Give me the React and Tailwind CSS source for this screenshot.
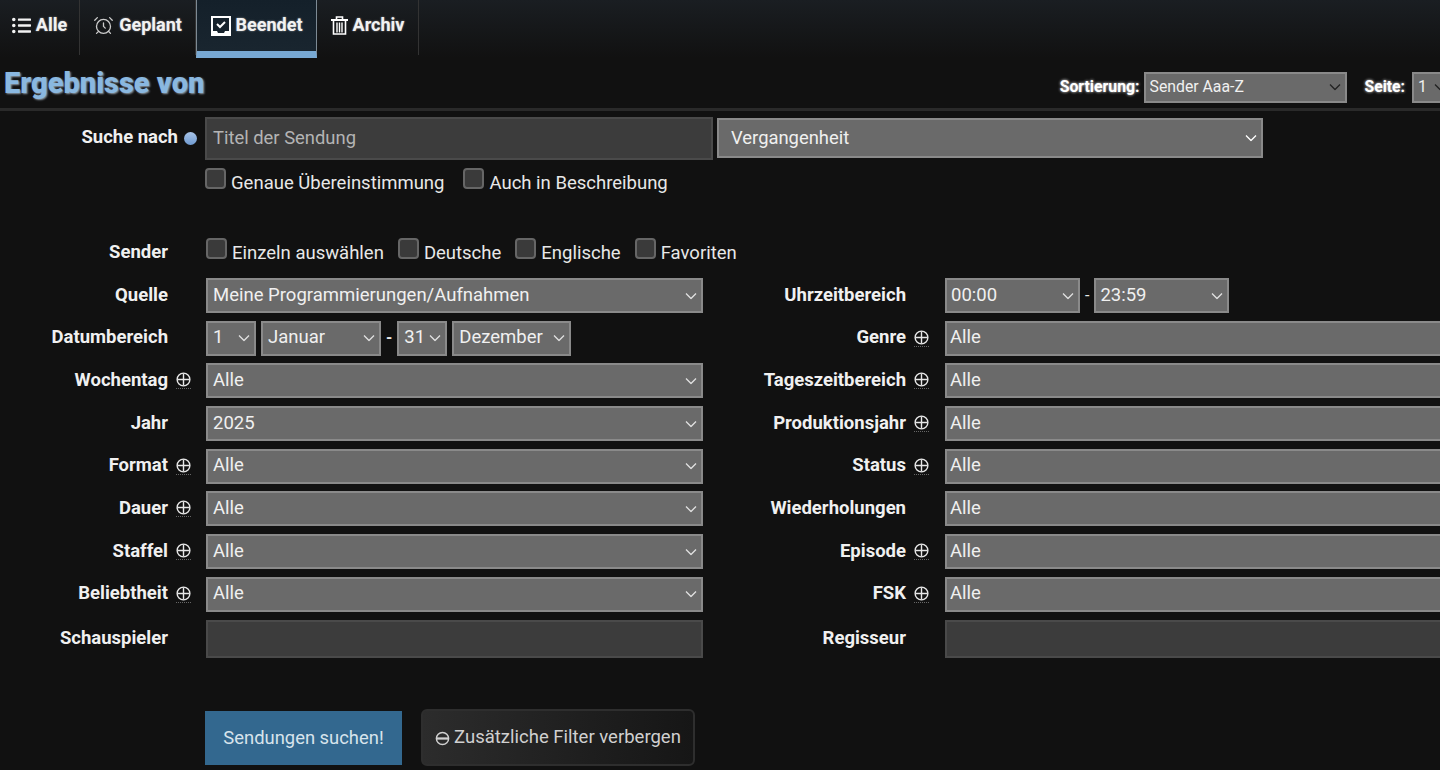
import { AlarmClock } from 'lucide-react';
import { FaListUl } from 'react-icons/fa';

const LEFT_ROWS = [
  { label: 'Wochentag', value: 'Alle', plus: true },
  { label: 'Jahr', value: '2025' },
  { label: 'Format', value: 'Alle', plus: true },
  { label: 'Dauer', value: 'Alle', plus: true },
  { label: 'Staffel', value: 'Alle', plus: true },
  { label: 'Beliebtheit', value: 'Alle', plus: true },
];

const RIGHT_ROWS = [
  { label: 'Tageszeitbereich', value: 'Alle', plus: true },
  { label: 'Produktionsjahr', value: 'Alle', plus: true },
  { label: 'Status', value: 'Alle', plus: true },
  { label: 'Wiederholungen', value: 'Alle' },
  { label: 'Episode', value: 'Alle', plus: true },
  { label: 'FSK', value: 'Alle', plus: true },
];

function Select({ value, className = '', textClass = 'text-[18.5px] pl-[5px]', chevronClass = 'text-[#e0e0e0]' }) {
  return (
    <div className={`relative h-[35px] shrink-0 ${className}`}>
      <select
        defaultValue={value}
        className={`h-full w-full appearance-none border-2 border-[#8a8a8a] bg-[#6a6a6a] text-[#f0f0f0] ${textClass}`}
      >
        <option>{value}</option>
      </select>
      <svg viewBox="0 0 12 7" className={`pointer-events-none absolute right-[6px] top-1/2 h-[7px] w-[12px] -translate-y-1/2 ${chevronClass}`} fill="none" stroke="currentColor" strokeWidth="1.3">
        <path d="M1 1l5 5 5-5" />
      </svg>
    </div>
  );
}

function Check({ label }) {
  return (
    <label className="flex items-start gap-[5px] text-[18.5px] text-[#e8e8e8]">
      <span className="mt-[2px] h-[21px] w-[21px] rounded-[4px] border-2 border-[#666] bg-[#3a3a3a]" />
      <span className="mt-[4px]">{label}</span>
    </label>
  );
}

function PlusIcon() {
  return (
    <span className="border-b border-dotted border-[#666] pb-[1px]">
      <svg viewBox="0 0 16 16" className="block h-[15px] w-[15px] text-[#e8e8e8]" fill="none" stroke="currentColor" strokeWidth="1.5">
        <circle cx="8" cy="8" r="6.8" />
        <path d="M1.5 8h13M8 1.5v13" />
      </svg>
    </span>
  );
}

function Label({ label, plus, className = '' }) {
  return (
    <div className={`flex items-center justify-end ${className}`}>
      <span className="text-[18.5px] font-bold text-[#f0f0f0]">{label}</span>
      <span className="flex w-[38px] justify-end pr-[15px]">{plus && <PlusIcon />}</span>
    </div>
  );
}

function Tab({ icon, label, width, active }) {
  return (
    <div
      className={`flex items-start justify-center gap-[5px] pt-[11px] text-[18px] font-bold text-[#f2f2f2] [text-shadow:0_0_2px_#ffffff88] ${width} ${
        active
          ? 'h-[58px] border-x border-b-[7px] border-[#7d8a94] border-b-[#78a9d4] bg-gradient-to-b from-[#14202a] to-[#19252f]'
          : 'h-[55px] border-r border-[#333]'
      }`}
    >
      {icon}
      {label}
    </div>
  );
}

function InboxCheck() {
  return (
    <svg viewBox="0 0 20 20" className="mt-[5px] h-[20px] w-[20px] text-white" fill="none">
      <path d="M1 1h18v18H1z" stroke="currentColor" strokeWidth="2" />
      <path d="M1 15h5l1 2h6l1-2h5v4H1z" fill="currentColor" />
      <path d="M6 8l3 3 5-5" stroke="currentColor" strokeWidth="2" />
    </svg>
  );
}

function TrashIcon() {
  return (
    <svg viewBox="0 0 17 20" className="mt-[4px] h-[21px] w-[17px] text-white" fill="none" stroke="currentColor">
      <path d="M0 4.5h17" strokeWidth="2" />
      <path d="M5.5 4V1.5h6V4" strokeWidth="1.6" />
      <path d="M2.5 5v13.5h12V5" strokeWidth="1.6" />
      <path d="M6 7v10M8.5 7v10M11 7v10" strokeWidth="1.4" />
    </svg>
  );
}

export default function App() {
  return (
    <div className="h-[770px] w-[1440px] overflow-hidden bg-[#111111] font-['Roboto',sans-serif]">
      {/* Tabs */}
      <div className="h-[58px] bg-gradient-to-b from-[#1a1e22] to-[#111111]">
        <div className="flex items-start">
          <Tab width="w-[80px]" label="Alle" icon={<FaListUl size={19} className="mt-[5px]" />} />
          <Tab width="w-[116px]" label="Geplant" icon={<AlarmClock size={21} strokeWidth={1.5} className="mt-[4px] text-[#ccc]" />} />
          <Tab width="w-[121px]" label="Beendet" active icon={<InboxCheck />} />
          <Tab width="w-[102px]" label="Archiv" icon={<TrashIcon />} />
        </div>
      </div>

      {/* Title row */}
      <div className="flex h-[53px] items-center border-b-[3px] border-[#2a2a2a] pl-[4px]">
        <h1 className="pt-[2px] text-[29px] font-black text-[#8ab8e0] [text-shadow:1px_1px_2px_#cfe3f5aa]">Ergebnisse von</h1>
        <div className="ml-auto mt-[8px] flex items-center">
          <span className="mr-[4px] text-[15.8px] font-bold text-white [text-shadow:0_0_3px_#ffffff]">Sortierung:</span>
          <Select value="Sender Aaa-Z" className="!h-[31px] w-[203px]" textClass="text-[15.8px] pl-[4px]" chevronClass="text-[#222]" />
          <span className="ml-[18px] mr-[7px] text-[15.7px] font-bold text-white [text-shadow:0_0_3px_#ffffff]">Seite:</span>
          <Select value="1" className="-mr-[12px] !h-[31px] w-[40px]" textClass="text-[15.8px] pl-[4px]" chevronClass="text-[#222]" />
        </div>
      </div>

      {/* Search */}
      <div className="mt-[6px] flex items-start">
        <div className="flex h-[41px] w-[205px] items-center justify-end pr-[8px]">
          <span className="text-[18.5px] font-bold text-[#f0f0f0]">Suche nach</span>
          <span className="ml-[6px] mt-[2px] h-[13px] w-[13px] rounded-full bg-gradient-to-b from-[#a8c4e8] to-[#6f9ad0]" />
        </div>
        <div className="flex h-[43px] w-[508px] items-center border-2 border-[#4a4a4a] bg-[#3c3c3c] pb-[1px] pl-[6px] text-[18.4px] text-[#b4b4b4]">
          Titel der Sendung
        </div>
        <Select value="Vergangenheit" className="ml-[4px] mt-[1px] !h-[40px] w-[546px]" textClass="text-[18.4px] pl-[12px]" chevronClass="text-white" />
      </div>
      <div className="ml-[205px] mt-[6px] flex h-[30px] items-start gap-[19px]">
        <Check label="Genaue Übereinstimmung" />
        <Check label="Auch in Beschreibung" />
      </div>

      {/* Sender */}
      <div className="mt-[40px] flex h-[30px] items-start">
        <div className="mt-[3px] w-[206px]">
          <Label label="Sender" />
        </div>
        <div className="flex items-start gap-[14px]">
          <Check label="Einzeln auswählen" />
          <Check label="Deutsche" />
          <Check label="Englische" />
          <Check label="Favoriten" />
        </div>
      </div>

      {/* Filter grid */}
      <div className="mt-[12px] grid grid-cols-[206px_497px_242px_1fr] gap-y-[7.7px]">
        <Label label="Quelle" />
        <Select value="Meine Programmierungen/Aufnahmen" className="w-full" />
        <Label label="Uhrzeitbereich" className="pr-[1px]" />
        <div className="flex items-center gap-[5px] text-[#e8e8e8]">
          <Select value="00:00" className="w-[135px]" textClass="text-[18.5px] pl-[4px]" />-
          <Select value="23:59" className="w-[135px]" textClass="text-[18.5px] pl-[4px]" />
        </div>

        <Label label="Datumbereich" />
        <div className="flex items-center gap-[5px] text-[#e8e8e8]">
          <Select value="1" className="w-[50px]" />
          <Select value="Januar" className="w-[120px]" />
          <span className="font-bold">-</span>
          <Select value="31" className="w-[50px]" />
          <Select value="Dezember" className="w-[119px]" />
        </div>
        <Label label="Genre" plus className="pr-[1px]" />
        <Select value="Alle" className="w-[520px]" textClass="text-[18.5px] pl-[3px]" />

        {LEFT_ROWS.map((row, i) => (
          <div key={row.label} className="contents">
            <Label label={row.label} plus={row.plus} />
            <Select value={row.value} className="w-full" />
            <Label label={RIGHT_ROWS[i].label} plus={RIGHT_ROWS[i].plus} className="pr-[1px]" />
            <Select value={RIGHT_ROWS[i].value} className="w-[520px]" textClass="text-[18.5px] pl-[3px]" />
          </div>
        ))}

        <Label label="Schauspieler" />
        <div className="h-[38px] border-2 border-[#4a4a4a] bg-[#3c3c3c]" />
        <Label label="Regisseur" className="pr-[1px]" />
        <div className="h-[38px] w-[520px] border-2 border-[#4a4a4a] bg-[#3c3c3c]" />
      </div>

      {/* Buttons */}
      <div className="ml-[205px] mt-[51px] flex items-center gap-[19px]">
        <button className="mt-[2px] h-[54px] w-[197px] bg-[#33688f] text-[18.4px] text-[#d8e4ec]">Sendungen suchen!</button>
        <button className="flex h-[57px] w-[274px] items-center justify-center gap-[4px] rounded-[6px] border-2 border-[#2e2e2e] bg-gradient-to-r from-[#2c2c2c] to-[#161616] pt-[2px] text-[18.5px] text-[#d0d0d0]">
          <svg viewBox="0 0 16 16" className="h-[15px] w-[15px]" fill="none" stroke="currentColor" strokeWidth="1.6">
            <circle cx="8" cy="8" r="6.5" />
            <path d="M1.5 8h13" strokeWidth="2.4" />
          </svg>
          Zusätzliche Filter verbergen
        </button>
      </div>
    </div>
  );
}
